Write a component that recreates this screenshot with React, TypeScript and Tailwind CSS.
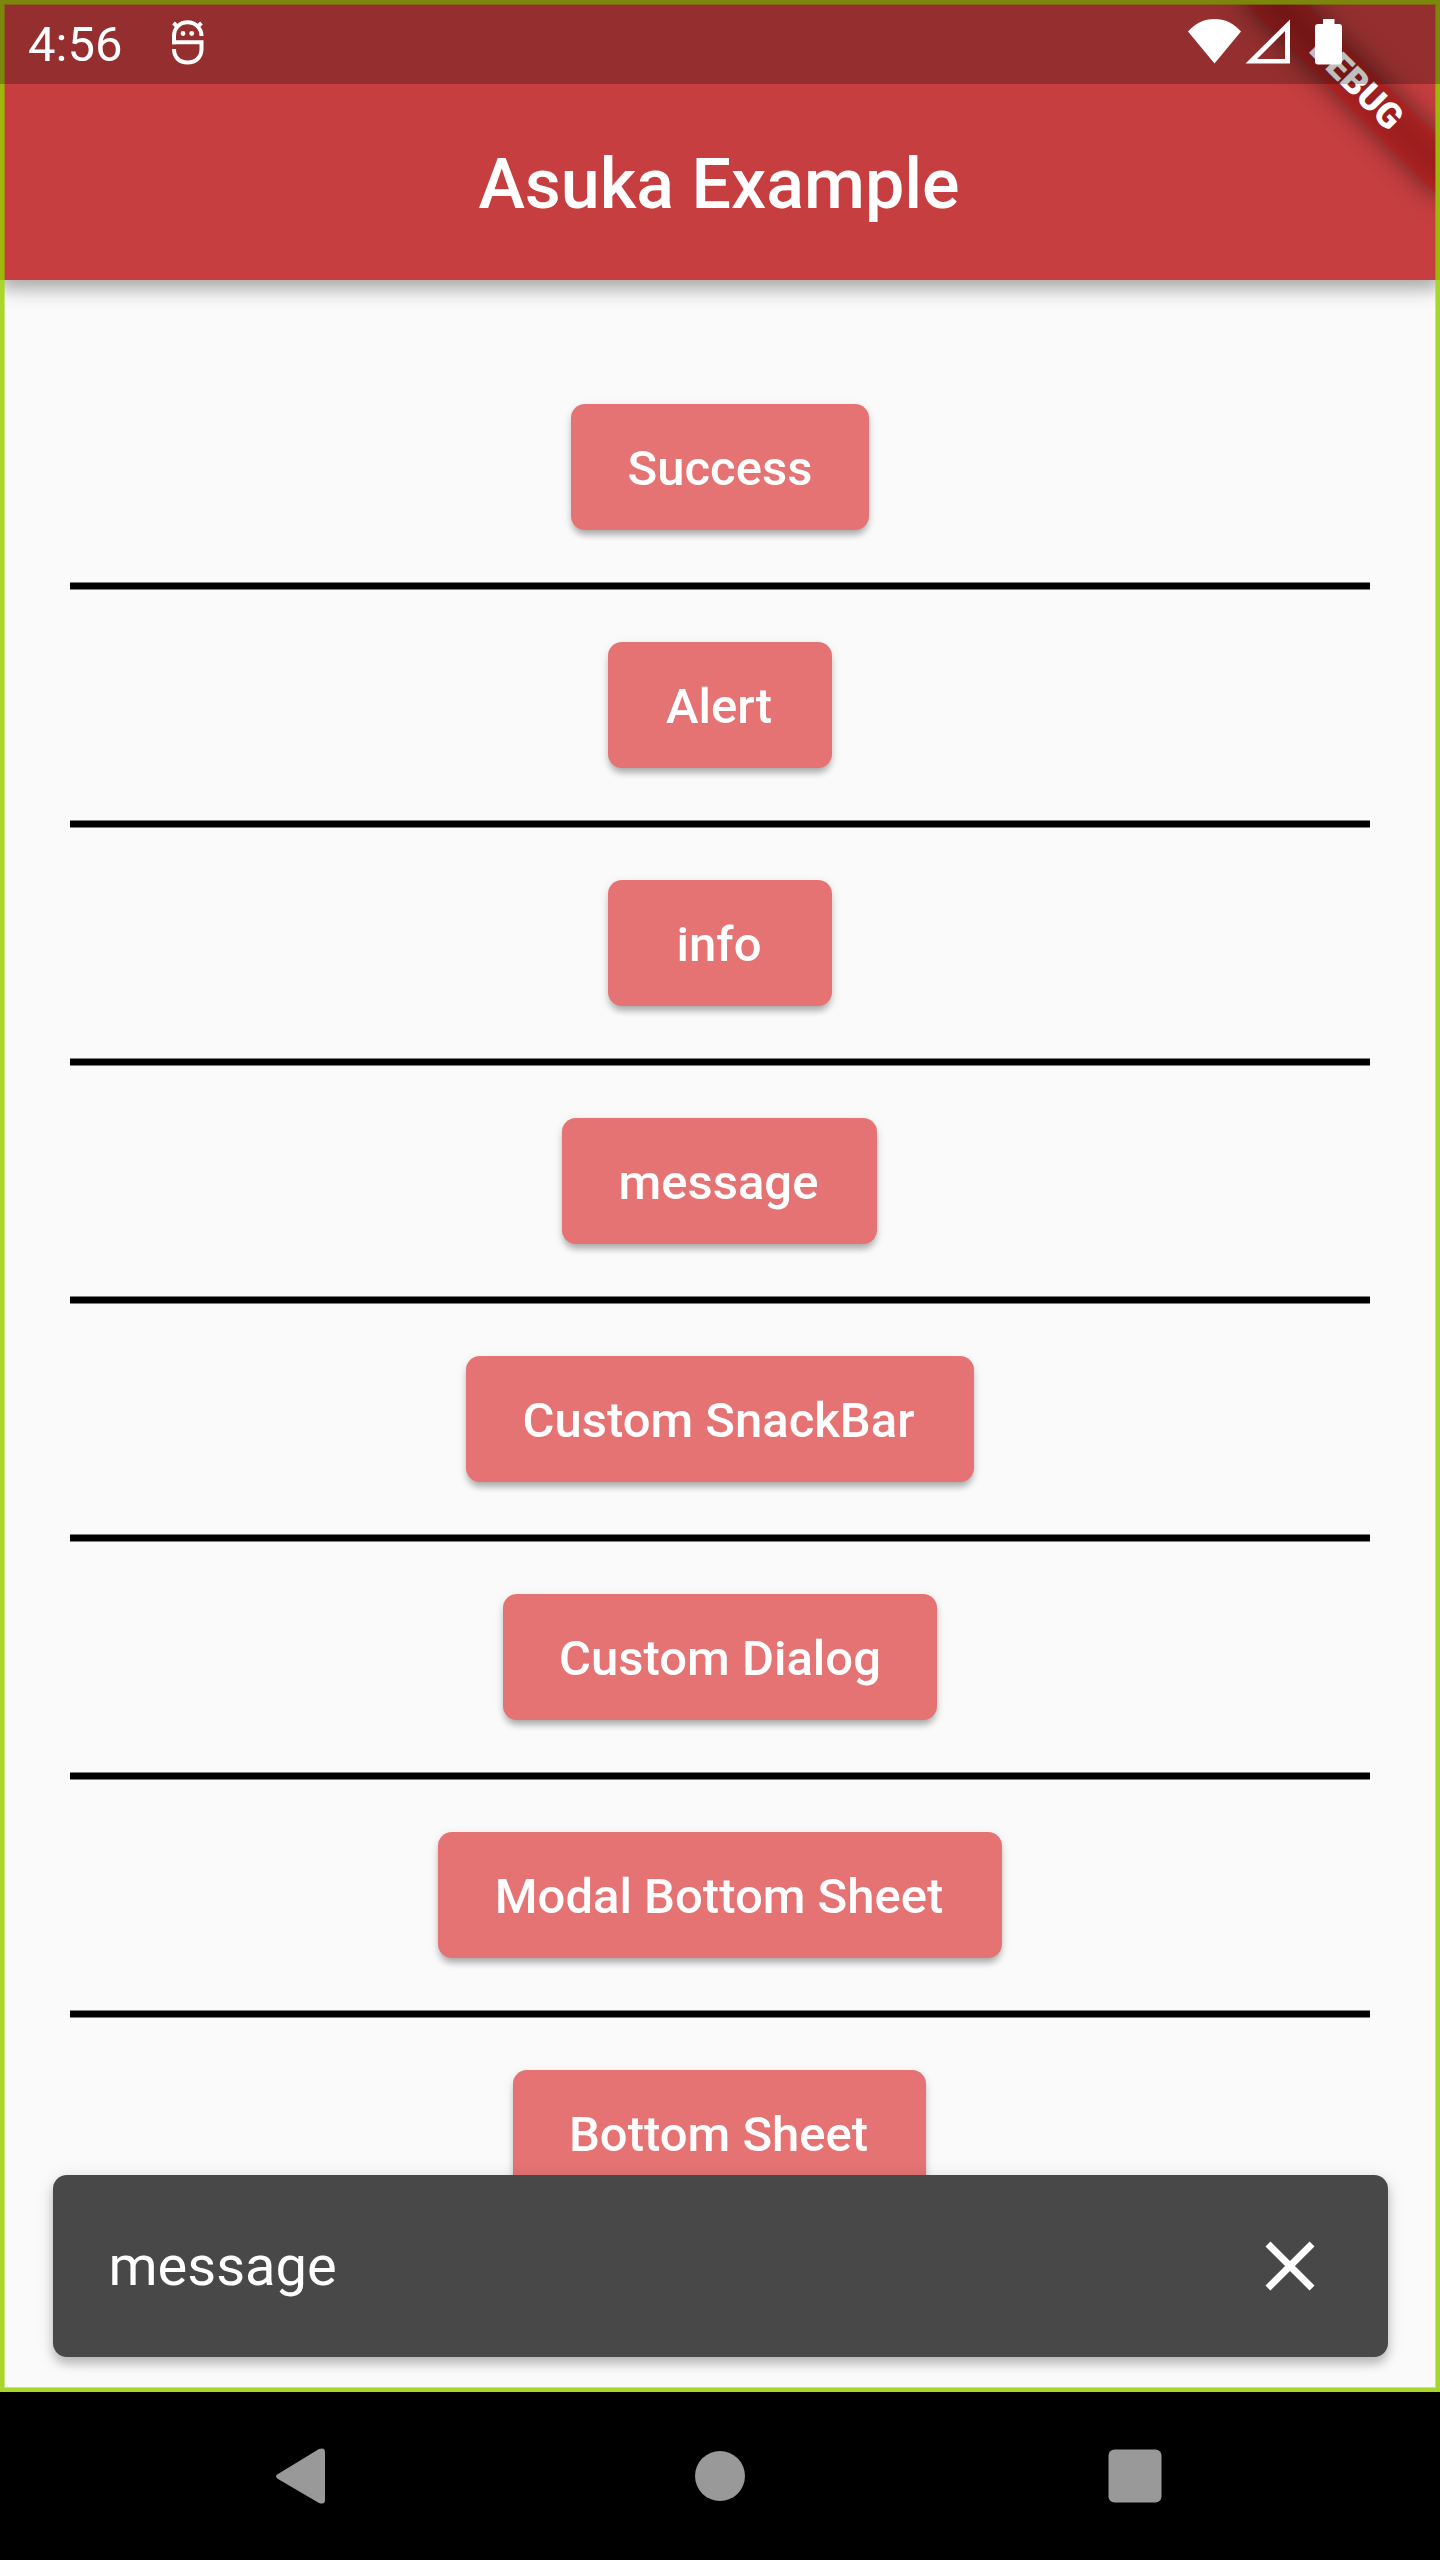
const buttons: { label: string; width: string }[] = [
  { label: "Success", width: "w-[298px] pr-0" },
  { label: "Alert", width: "w-[224px] pr-[2px]" },
  { label: "info", width: "w-[224px] pr-[2px]" },
  { label: "message", width: "w-[315px] mr-px pr-[2px]" },
  { label: "Custom SnackBar", width: "w-[508px] pr-[3px]" },
  { label: "Custom Dialog", width: "w-[434px] pr-0" },
  { label: "Modal Bottom Sheet", width: "w-[564px] pr-[2px]" },
  { label: "Bottom Sheet", width: "w-[413px] mr-px pr-[2px]" },
];

function RobotIcon() {
  return (
    <svg className="ml-[50px] h-[46px] w-[32px]" viewBox="0 0 32 46" fill="none" stroke="white" strokeWidth="4">
      <path d="M2 24.300V16C2 8 8 2.300 15.500 2.300S29.500 8 29.500 16" />
      <path d="M0 22.300H29.500V29C29.500 37 24 42.500 15.500 42.500S2 37 2 29" />
      <path d="M1.500 3l5 4.500M29.500 3l-5 4.500" />
      <circle cx="11" cy="13.500" r="2.400" fill="white" stroke="none" />
      <circle cx="19.700" cy="13.500" r="2.400" fill="white" stroke="none" />
    </svg>
  );
}

function StatusBar() {
  return (
    <div className="relative z-20 flex h-[84px] items-start bg-black/25">
      <div className="ml-[28px] mt-[16px] text-[49px] leading-[58px] text-white">4:56</div>
      <div className="mt-[20px]">
        <RobotIcon />
      </div>
      <svg className="absolute left-[1188px] top-[19px] h-[46px] w-[155px]" viewBox="0 0 155 46" fill="white">
        <path d="M0 12.500C7 4.500 16 0 26.500 0S46 4.500 53 12.500L26.500 44.500Z" />
        <path fillRule="evenodd" d="M102 0.500V44.500H57.500ZM97 12L69 40H97Z" />
        <path d="M135 0h11.500v5h4.500q3 0 3 3v34.500q0 3-3 3h-21q-3 0-3-3V8q0-3 3-3h5Z" />
      </svg>
    </div>
  );
}

function DebugBanner() {
  return (
    <div className="absolute right-0 top-0 z-10 h-[280px] w-[280px] overflow-hidden">
      <div className="absolute left-[140px] top-[98px] h-[42px] w-[280px] origin-[140px_-98px] rotate-45">
        <div className="absolute inset-0 bg-black/50 blur-[13.900px]" />
        <div className="absolute inset-0 flex items-center justify-center bg-[#b71c1c]/63 text-[35.700px] font-black leading-none text-white">
          DEBUG
        </div>
      </div>
    </div>
  );
}

export default function App() {
  return (
    <div className="relative flex h-[2560px] w-[1440px] flex-col overflow-hidden bg-black font-['Roboto',sans-serif]">
      <div className="relative flex h-[2392px] flex-col overflow-hidden bg-[#fafafa]">
        <header className="relative z-10 h-[280px] shrink-0 bg-[#c63e3f] shadow-[0_7px_14px_rgba(0,0,0,0.180),0_12px_18px_rgba(0,0,0,0.120),0_3px_30px_rgba(0,0,0,0.080)]">
          <DebugBanner />
          <StatusBar />
          <h1 className="flex h-[196px] items-center justify-center pr-[2px] pt-[3px] text-[70px] font-medium leading-[82px] text-white">
            Asuka Example
          </h1>
        </header>
        <main className="flex flex-col px-[70px] pt-[103px]">
          {buttons.map((b) => (
            <div key={b.label} className="flex h-[238px] shrink-0 flex-col items-center pt-[21px]">
              <button
                className={`${b.width} h-[126px] shrink-0 whitespace-nowrap rounded-[14px] bg-[#e57373] pt-[3px] text-[49px] font-medium leading-[58px] text-white shadow-[0_7px_7px_-3px_rgba(0,0,0,0.200),0_5px_7px_rgba(0,0,0,0.120),0_2px_12px_rgba(0,0,0,0.070)]`}
              >
                {b.label}
              </button>
              <div className="mt-[52px] h-[8px] w-full shrink-0 border-y border-[#7d7d7d] bg-black" />
            </div>
          ))}
        </main>
        <div className="absolute left-[52.500px] top-[2175.300px] flex h-[182px] w-[1335px] items-center justify-between rounded-[14px] bg-[#484848] px-[56px] text-white shadow-[0_7px_10px_rgba(0,0,0,0.200),0_3px_18px_rgba(0,0,0,0.120)]">
          <span className="text-[56px] leading-[66px]">message</span>
          <svg className="h-[84px] w-[84px]" viewBox="0 0 24 24" fill="white">
            <path d="M19 6.410L17.590 5 12 10.590 6.410 5 5 6.410 10.590 12 5 17.590 6.410 19 12 13.410 17.590 19 19 17.590 13.410 12z" />
          </svg>
        </div>
        <div className="pointer-events-none absolute inset-0 z-30 flex flex-col">
          <div className="h-[84px] border-x-[4px] border-t-[4px] border-[#7a870a]">
            <div className="h-full border-x border-t border-[#7a870a]/60" />
          </div>
          <div className="h-[196px] border-x-[4px] border-[#9cb80a]">
            <div className="h-full border-x border-[#9cb80a]/60" />
          </div>
          <div className="flex flex-1 border-x-[4px] border-b-[4px] border-[#a8d62b]">
            <div className="flex-1 border-x border-b border-[#a8d62b]/60" />
          </div>
        </div>
      </div>
      <nav className="h-[168px] bg-black">
        <svg className="h-[168px] w-[1440px]" viewBox="0 0 1440 168" fill="#999999">
          <path d="M278 82L319 57Q325 55 325 60V108Q325 113 319 111L278 87Q274 84 278 82Z" />
          <circle cx="720" cy="84" r="25" />
          <rect x="1108.500" y="57.500" width="53" height="53" rx="6" />
        </svg>
      </nav>
    </div>
  );
}
